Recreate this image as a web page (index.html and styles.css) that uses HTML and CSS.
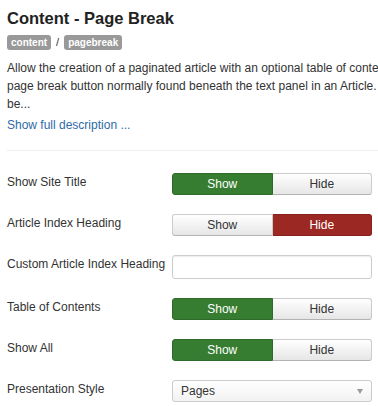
FILE: index.html
```html
<!DOCTYPE html>
<html lang="en">
<head>
  <meta charset="UTF-8">
  <title>Content - Page Break</title>
  <link rel="stylesheet" href="styles.css">
</head>
<body>
  <div class="plugin">
    <div class="info">
      <h2 class="title">Content - Page Break</h2>
      <div class="tags">
        <span class="badge">content</span>
        <span class="sep">/</span>
        <span class="badge">pagebreak</span>
      </div>
      <p class="desc">
        Allow the creation of a paginated article with an optional table of contents. Insert page breaks through the<br>
        page break button normally found beneath the text panel in an Article. The text displayed will<br>
        be...
      </p>
      <a class="more" href="#">Show full description ...</a>
    </div>

    <hr class="divider">

    <div class="form">
      <div class="control-group">
        <label class="control-label">Show Site Title</label>
        <div class="btn-group">
          <button class="btn active-yes">Show</button>
          <button class="btn">Hide</button>
        </div>
      </div>
      <div class="control-group">
        <label class="control-label">Article Index Heading</label>
        <div class="btn-group">
          <button class="btn">Show</button>
          <button class="btn active-no">Hide</button>
        </div>
      </div>
      <div class="control-group">
        <label class="control-label">Custom Article Index Heading</label>
        <input class="text-input" type="text">
      </div>
      <div class="control-group">
        <label class="control-label">Table of Contents</label>
        <div class="btn-group">
          <button class="btn active-yes">Show</button>
          <button class="btn">Hide</button>
        </div>
      </div>
      <div class="control-group">
        <label class="control-label">Show All</label>
        <div class="btn-group">
          <button class="btn active-yes">Show</button>
          <button class="btn">Hide</button>
        </div>
      </div>
      <div class="control-group">
        <label class="control-label">Presentation Style</label>
        <div class="select">
          <span>Pages</span>
          <span class="caret"></span>
        </div>
      </div>
    </div>
  </div>
</body>
</html>
```

FILE: styles.css
```css
html, body {
  margin: 0;
  padding: 0;
  height: 406px;
  overflow: hidden;
  background: #fff;
}

body {
  font-family: "Liberation Sans", Arial, sans-serif;
  font-size: 12px;
  line-height: 18px;
  color: #333;
}

.plugin {
  width: 560px;
  padding-left: 7px;
}

.title {
  margin: 0;
  padding-top: 6px;
  font-size: 16.5px;
  line-height: 24px;
  font-weight: bold;
  color: #222;
}

.tags {
  display: flex;
  align-items: center;
  gap: 4px;
  margin-top: 5px;
  line-height: 15px;
}

.badge {
  background: #999;
  color: #fff;
  font-size: 10px;
  font-weight: bold;
  line-height: 15px;
  padding: 0 4px;
  border-radius: 3px;
}

.sep {
  font-size: 11px;
  padding: 0 1px;
}

.desc {
  margin: 9px 0 0;
  white-space: nowrap;
}

.more {
  display: inline-block;
  margin-top: 3px;
  color: #2f6aa8;
  text-decoration: none;
}

.divider {
  margin: 16px 0 0;
  border: 0;
  border-top: 1px solid #eee;
}

.form {
  padding-top: 22px;
}

.control-group {
  display: flex;
  align-items: flex-start;
  margin-bottom: 19px;
}

.control-label {
  width: 165px;
  white-space: nowrap;
}

.btn-group {
  display: flex;
  width: 200px;
}

.btn {
  flex: 1;
  height: 22px;
  margin: 0;
  padding: 0;
  font-family: inherit;
  font-size: 12px;
  color: #333;
  background: linear-gradient(#fff, #e6e6e6);
  border: 1px solid #ccc;
  border-bottom-color: #b3b3b3;
  cursor: pointer;
}

.btn:first-child {
  border-radius: 3px 0 0 3px;
}

.btn:last-child {
  border-left: 0;
  border-radius: 0 3px 3px 0;
}

.btn.active-yes {
  background: #367d31;
  border-color: #2e6b2a;
  color: #fff;
}

.btn.active-no {
  background: #9c2823;
  border-color: #86221e;
  color: #fff;
}

.text-input {
  width: 200px;
  height: 24px;
  box-sizing: border-box;
  margin: 0;
  border: 1px solid #ccc;
  border-radius: 3px;
  box-shadow: inset 0 1px 1px rgba(0, 0, 0, 0.075);
}

.select {
  width: 200px;
  height: 22px;
  box-sizing: border-box;
  display: flex;
  align-items: center;
  justify-content: space-between;
  padding: 0 8px;
  border: 1px solid #ccc;
  border-radius: 3px;
  background: linear-gradient(#fff, #f2f2f2);
}

.caret {
  width: 0;
  height: 0;
  border-left: 3px solid transparent;
  border-right: 3px solid transparent;
  border-top: 5px solid #999;
}
```
